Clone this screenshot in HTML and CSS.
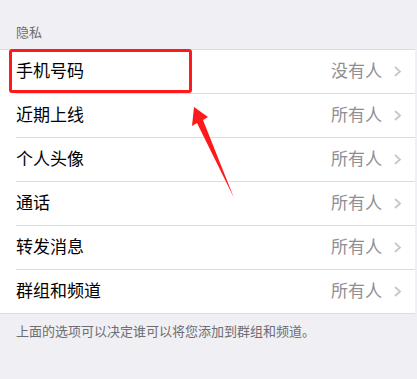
FILE: index.html
```html
<!DOCTYPE html>
<html lang="zh">
<head>
<meta charset="utf-8">
<link rel="stylesheet" href="styles.css">
</head>
<body>
<div class="page">
  <div class="section-title">隐私</div>
  <div class="list">
    <div class="row"><span class="label">手机号码</span><span class="value">没有人</span><svg class="chev" viewBox="0 0 8 11" width="8" height="11"><path d="M1 1l5 4.5L1 10"/></svg></div>
    <div class="row"><span class="label">近期上线</span><span class="value">所有人</span><svg class="chev" viewBox="0 0 8 11" width="8" height="11"><path d="M1 1l5 4.5L1 10"/></svg></div>
    <div class="row"><span class="label">个人头像</span><span class="value">所有人</span><svg class="chev" viewBox="0 0 8 11" width="8" height="11"><path d="M1 1l5 4.5L1 10"/></svg></div>
    <div class="row"><span class="label">通话</span><span class="value">所有人</span><svg class="chev" viewBox="0 0 8 11" width="8" height="11"><path d="M1 1l5 4.5L1 10"/></svg></div>
    <div class="row"><span class="label">转发消息</span><span class="value">所有人</span><svg class="chev" viewBox="0 0 8 11" width="8" height="11"><path d="M1 1l5 4.5L1 10"/></svg></div>
    <div class="row last"><span class="label">群组和频道</span><span class="value">所有人</span><svg class="chev" viewBox="0 0 8 11" width="8" height="11"><path d="M1 1l5 4.5L1 10"/></svg></div>
  </div>
  <div class="footer">上面的选项可以决定谁可以将您添加到群组和频道。</div>
  <div class="highlight"></div>
  <svg class="arrow" width="417" height="379" viewBox="0 0 417 379"><polygon points="194,107 208,117 203,120 234,198 197,123 192,126"/></svg>
</div>
</body>
</html>
```
FILE: styles.css
```css
html, body {
  margin: 0;
  padding: 0;
  background: #efeff4;
}
.page {
  position: relative;
  width: 417px;
  height: 379px;
  overflow: hidden;
  font-family: "Noto Sans CJK SC", "Noto Sans", sans-serif;
}
.section-title {
  padding: 24px 16px 9px;
  font-size: 13px;
  line-height: 16px;
  color: #6d6d72;
}
.list {
  background: #fff;
  border-top: 1px solid #dcdce0;
  margin-right: 2px;
}
.row {
  display: flex;
  align-items: center;
  box-sizing: border-box;
  height: 44px;
  padding-bottom: 3px;
  margin-left: 16px;
  padding-right: 13px;
  border-bottom: 1px solid #dcdce0;
}
.row.last {
  margin-left: 0;
  padding-left: 16px;
}
.label {
  flex: 1;
  font-size: 17px;
  line-height: 20px;
  color: #000;
}
.value {
  font-size: 17px;
  line-height: 20px;
  color: #8e8e93;
  margin-right: 12px;
}
.chev {
  display: block;
  margin-top: 2px;
}
.chev path {
  fill: none;
  stroke: #c7c7cc;
  stroke-width: 1.8;
}
.footer {
  padding: 9px 16px;
  font-size: 13px;
  line-height: 16px;
  color: #6d6d72;
}
.highlight {
  position: absolute;
  left: 9px;
  top: 49px;
  width: 177px;
  height: 38px;
  border: 3px solid #fe1a1a;
  border-radius: 3px;
}
.arrow {
  position: absolute;
  left: 0;
  top: 0;
}
.arrow polygon {
  fill: #fe1a1a;
}
```
